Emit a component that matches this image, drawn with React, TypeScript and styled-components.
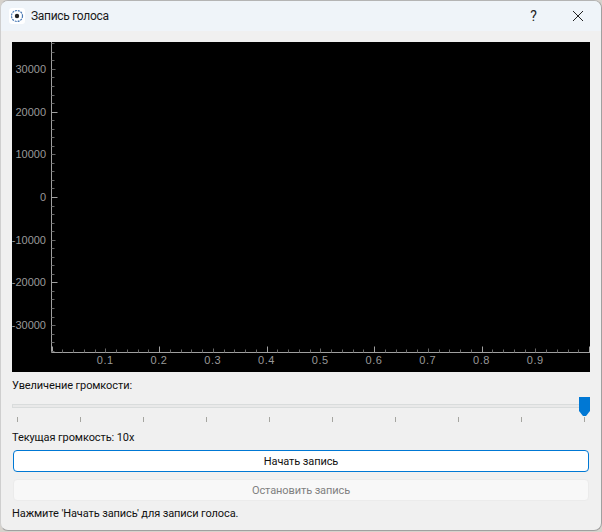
import React from "react";
import styled, { createGlobalStyle } from "styled-components";

const GlobalStyle = createGlobalStyle`
    html, body {
        margin: 0;
        padding: 0;
        width: 602px;
        height: 532px;
        overflow: hidden;
        background: #d6d2cc;
    }
`;

const Window = styled.div`
    box-sizing: border-box;
    width: 602px;
    height: 531px;
    display: flex;
    flex-direction: column;
    background: #f0f0f0;
    border: 1px solid #a0a0a0;
    border-left-color: #cfcfcf;
    border-top-color: #b4b4b4;
    border-radius: 8px;
    overflow: hidden;
    font-family: Roboto, "Noto Sans", sans-serif;
    font-size: 11px;
    letter-spacing: -0.1px;
    color: #111;
`;

const TitleBar = styled.div`
    height: 30px;
    flex: none;
    display: flex;
    align-items: center;
    padding-left: 8px;
    padding-bottom: 1px;
    box-sizing: border-box;
    background: #eff4f9;
    font-size: 12px;
    letter-spacing: -0.3px;
`;

const AppIcon = styled.svg`
    width: 16px;
    height: 16px;
    margin-right: 6px;
`;

const TitleText = styled.span`
    flex: 1;
    color: #1a1a1a;
`;

const TitleButton = styled.div`
    width: 45px;
    height: 30px;
    display: flex;
    align-items: center;
    justify-content: center;
    font-size: 14px;
    color: #222;
`;

const CloseButton = styled(TitleButton)`
    padding-right: 2px;
    box-sizing: border-box;
`;

const Content = styled.div`
    flex: 1;
    display: flex;
    flex-direction: column;
    padding: 11px 11px 0;
`;

const Plot = styled.svg`
    display: block;
    width: 578px;
    height: 330px;
    background: #000;
    font-family: "Liberation Sans", sans-serif;
    font-size: 11px;
    letter-spacing: 0;
`;

const Label = styled.div<{ $top: number }>`
    height: 16px;
    line-height: 16px;
    margin-top: ${(p) => p.$top}px;
    white-space: nowrap;
`;

const SliderBlock = styled.div`
    position: relative;
    height: 26px;
    margin-top: 3px;
`;

const Groove = styled.div`
    position: absolute;
    left: 0;
    right: 0;
    top: 7px;
    height: 4px;
    box-sizing: border-box;
    background: #e9e9e9;
    border: 1px solid #d9dcdc;
`;

const Handle = styled.svg`
    position: absolute;
    right: 0;
    top: 0;
    width: 11px;
    height: 19px;
`;

const Ticks = styled.div`
    position: absolute;
    left: 5px;
    right: 5px;
    top: 20px;
    display: flex;
    justify-content: space-between;
`;

const Tick = styled.span`
    width: 1px;
    height: 5px;
    background: #a5a5a0;
`;

const Button = styled.div<{ $primary?: boolean }>`
    box-sizing: border-box;
    height: 22px;
    margin: ${(p) => (p.$primary ? 4 : 7)}px 1px 0;
    display: flex;
    align-items: center;
    justify-content: center;
    border-radius: 4px;
    background: ${(p) => (p.$primary ? "#fff" : "#f8f8f8")};
    border: ${(p) => (p.$primary ? "1.5px solid #0078d4" : "1px solid #ebebeb")};
    color: ${(p) => (p.$primary ? "#111" : "#808080")};
`;

const majorY = [30000, 20000, 10000, 0, -10000, -20000, -30000];
const axisX = 39.5;
const axisY = 310.5;
const yFor = (v: number) => 155 - (v / 10000) * 42.7;
const xFor = (v: number) => axisX + v * 537.5;

const tickLength = (step: number) => (step % 10 === 0 ? 6 : step % 5 === 0 ? 4 : 3);

const PlotArea: React.FC = () => {
    const stepsY: number[] = [];
    for (let s = -18; s <= 18; s++) stepsY.push(s);
    const stepsX: number[] = [];
    for (let s = 1; s <= 50; s++) stepsX.push(s);
    return (
        <Plot viewBox="0 0 578 330">
            <path d={`M${axisX} 0V${axisY}H578`} stroke="#a0a0a0" fill="none" />
            <path d={`M${axisX + 1} ${axisY - 6}V${axisY}`} stroke="#a0a0a0" fill="none" />
            {stepsY.map((s) => (
                <line
                    key={s}
                    x1={axisX}
                    x2={axisX + tickLength(s)}
                    y1={Math.round(yFor(s * 2000)) + 0.5}
                    y2={Math.round(yFor(s * 2000)) + 0.5}
                    stroke={s % 10 === 0 ? "#a0a0a0" : "#666"}
                />
            ))}
            {stepsX.map((s) => (
                <line
                    key={s}
                    x1={Math.round(xFor(s / 50)) + 0.5}
                    x2={Math.round(xFor(s / 50)) + 0.5}
                    y1={axisY}
                    y2={axisY - tickLength(s)}
                    stroke={s % 10 === 0 ? "#a0a0a0" : "#666"}
                />
            ))}
            {majorY.map((v) => (
                <text key={v} x={34} y={yFor(v) + 4} textAnchor="end" fill="#999">
                    {v}
                </text>
            ))}
            {[1, 2, 3, 4, 5, 6, 7, 8, 9].map((n) => (
                <text key={n} x={xFor(n / 10)} y={322} textAnchor="middle" fill="#999" letterSpacing="0.5">
                    {`0.${n}`}
                </text>
            ))}
        </Plot>
    );
};

const App: React.FC = () => {
    return (
        <>
            <GlobalStyle />
            <Window>
                <TitleBar>
                    <AppIcon viewBox="0 0 16 16">
                        <rect x="0" y="0" width="16" height="16" rx="3" fill="#fff" />
                        <circle cx="8" cy="8" r="5.5" fill="none" stroke="#4a7ab5" strokeWidth="1.2" strokeDasharray="2 0.9" />
                        <circle cx="8" cy="8" r="2.2" fill="#222" />
                    </AppIcon>
                    <TitleText>Запись голоса</TitleText>
                    <TitleButton>?</TitleButton>
                    <CloseButton>
                        <svg width="12" height="12" viewBox="0 0 12 12">
                            <path d="M1 1L11 11M11 1L1 11" stroke="#222" strokeWidth="1" fill="none" />
                        </svg>
                    </CloseButton>
                </TitleBar>
                <Content>
                    <PlotArea />
                    <Label $top={6}>Увеличение громкости:</Label>
                    <SliderBlock>
                        <Groove />
                        <Ticks>
                            {Array.from({ length: 10 }).map((_, i) => (
                                <Tick key={i} />
                            ))}
                        </Ticks>
                        <Handle viewBox="0 0 11 19">
                            <path d="M0 0H11V14L7 19H4L0 14Z" fill="#0078d4" />
                        </Handle>
                    </SliderBlock>
                    <Label $top={7}>Текущая громкость: 10x</Label>
                    <Button $primary>Начать запись</Button>
                    <Button>Остановить запись</Button>
                    <Label $top={5}>Нажмите 'Начать запись' для записи голоса.</Label>
                </Content>
            </Window>
        </>
    );
};

export default App;
